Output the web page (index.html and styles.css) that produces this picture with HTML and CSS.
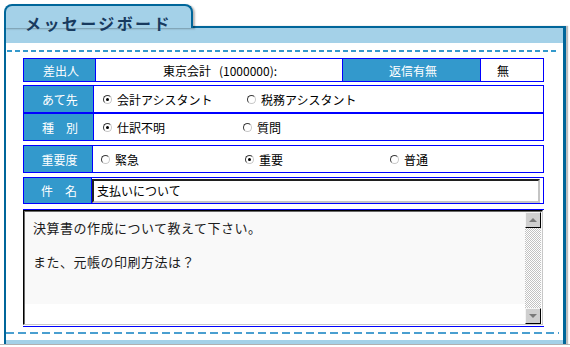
FILE: index.html
```html
<!DOCTYPE html>
<html lang="ja">
<head>
<meta charset="utf-8">
<title>メッセージボード</title>
<link rel="stylesheet" href="styles.css">
</head>
<body>
<div class="board">
  <div class="tab"><h1 class="title">メッセージボード</h1></div>
  <div class="panel">
    <div class="band"></div>
    <div class="dash-top"></div>
    <div class="form">
      <div class="row row-sender">
        <div class="label">差出人</div>
        <div class="value center">東京会計&nbsp;&nbsp;&nbsp;(1000000):</div>
        <div class="label">返信有無</div>
        <div class="value reply">無</div>
      </div>

      <div class="row row-to gap3">
        <div class="label">あて先</div>
        <div class="value opts">
          <span class="opt w144"><span class="radio on"></span>会計アシスタント</span>
          <span class="opt"><span class="radio"></span>税務アシスタント</span>
        </div>
      </div>

      <div class="row row-to">
        <div class="label">種　別</div>
        <div class="value opts">
          <span class="opt w140"><span class="radio on"></span>仕訳不明</span>
          <span class="opt"><span class="radio"></span>質問</span>
        </div>
      </div>

      <div class="row row-prio gap4">
        <div class="label">重要度</div>
        <div class="value opts prio">
          <span class="opt w144"><span class="radio"></span>緊急</span>
          <span class="opt w145"><span class="radio on"></span>重要</span>
          <span class="opt"><span class="radio"></span>普通</span>
        </div>
      </div>

      <div class="row row-subject gap4">
        <div class="label">件　名</div>
        <div class="value subject"><div class="input">支払いについて</div></div>
      </div>

      <div class="body-wrap">
        <div class="textarea">
          <div class="text">決算書の作成について教えて下さい。<br><br>また、元帳の印刷方法は？</div>
          <div class="scrollbar">
            <div class="sb-btn"><span class="arrow up"></span></div>
            <div class="sb-track"></div>
            <div class="sb-btn"><span class="arrow down"></span></div>
          </div>
        </div>
      </div>
    </div>
    <div class="dash-bottom"></div>
    <div class="band-bottom"></div>
  </div>
</div>
<div class="rule"></div>
</body>
</html>
```

FILE: styles.css
```css
html, body {
  margin: 0;
  padding: 0;
  background: #ffffff;
}

body {
  font-family: "Noto Sans CJK JP", "Noto Sans", sans-serif;
  font-size: 12px;
  color: #000;
  overflow: hidden;
}

.board {
  margin: 4px 0 0 4px;
  width: 562px;
}

.tab {
  position: relative;
  z-index: 2;
  box-sizing: border-box;
  width: 189px;
  height: 24px;
  margin-bottom: -2px;
  background: #a4d1e8;
  border: 2px solid #00669a;
  border-bottom: none;
  border-radius: 8px 8px 0 0;
  box-shadow: 2px 1px 2px rgba(0, 0, 0, 0.28);
}

.title {
  margin: 0;
  padding: 8px 0 0 19px;
  font-size: 16px;
  line-height: 18px;
  font-weight: bold;
  letter-spacing: 2.4px;
  color: #183a5e;
}

.panel {
  position: relative;
  z-index: 1;
  box-sizing: border-box;
  width: 562px;
  border-top: 2px solid #00669a;
  border-left: 2px solid #00669a;
  border-right: 3px solid #00669a;
  box-shadow: 2px 0 1px rgba(0, 0, 0, 0.25);
  background: #fff;
}

.band {
  height: 15px;
  background: #a4d1e8;
}

.dash-top {
  height: 2px;
  margin: 7px 4px 0 1px;
  background: repeating-linear-gradient(to right, #3399cc 0 5px, transparent 5px 8px);
}

.form {
  margin: 6px 0 0 17px;
  width: 521px;
}

.row {
  box-sizing: border-box;
  width: 521px;
  height: 28px;
  border: 1px solid #0000ff;
  display: grid;
}

.gap3 { margin-top: 3px; }
.gap4 { margin-top: 4px; }

.row-sender {
  height: 24px;
  grid-template-columns: 72px 247px 138px 1fr;
}

.row-to { grid-template-columns: 70px 1fr; }
.row-prio { grid-template-columns: 69px 1fr; }
.row-subject {
  height: 27px;
  grid-template-columns: 68px 1fr;
}

.label {
  background: #3399cc;
  color: #ffffff;
  border-right: 1px solid #0000ff;
  display: flex;
  align-items: center;
  justify-content: center;
  padding-left: 3px;
  white-space: nowrap;
}

.value {
  display: flex;
  align-items: center;
  white-space: nowrap;
  border-right: 1px solid #0000ff;
}

.value:last-child { border-right: none; }

.center {
  justify-content: center;
  padding-left: 2px;
}

.reply { padding-left: 16px; }

.opts { padding-left: 9px; }
.prio { padding-left: 8px; }

.opt {
  display: inline-flex;
  align-items: center;
}

.w140 { width: 140px; }
.w144 { width: 144px; }
.w145 { width: 145px; }

.radio {
  box-sizing: border-box;
  width: 9px;
  height: 9px;
  margin-right: 5px;
  border-radius: 50%;
  border: 1px solid;
  border-color: #3a3a3a #c8c8c8 #c8c8c8 #3a3a3a;
  background: #fff;
  position: relative;
}

.radio.on::after {
  content: "";
  position: absolute;
  left: 2px;
  top: 2px;
  width: 3px;
  height: 3px;
  border-radius: 50%;
  background: #000;
}

.subject {
  align-items: flex-start;
  padding-top: 1px;
}

.input {
  box-sizing: border-box;
  width: 448px;
  height: 24px;
  padding: 0 0 0 3px;
  border: 2px solid;
  border-color: #202020 #c4c4c4 #c4c4c4 #202020;
  line-height: 20px;
  background: #fff;
}

.body-wrap {
  margin-top: 5px;
  width: 521px;
  border-top: 1px solid #0000ff;
  border-bottom: 1px solid #0000ff;
  padding-bottom: 1px;
}

.textarea {
  box-sizing: border-box;
  width: 520px;
  height: 115px;
  border: 1px solid;
  border-color: #000 #c8c8c8 #c8c8c8 #000;
  box-shadow: inset 1px 1px 0 #6a6a6a;
  display: flex;
  background: linear-gradient(#f9f9f9, #f9f9f9) no-repeat 0 0 / 100% 93px, #fff;
}

.text {
  flex: 1;
  padding: 8px 0 0 9px;
  font-size: 13px;
  line-height: 17px;
  letter-spacing: 0.5px;
  color: #1c1c1c;
}

.scrollbar {
  width: 16px;
  margin: 1px 1px 0 0;
  display: flex;
  flex-direction: column;
}

.sb-btn {
  box-sizing: border-box;
  height: 16px;
  background: #cfcfcf;
  border: 1px solid;
  border-color: #f4f4f4 #000 #000 #f4f4f4;
  display: flex;
  align-items: center;
  justify-content: center;
}

.sb-track {
  flex: 1;
  background: repeating-conic-gradient(#c2c2c2 0 25%, #ffffff 0 50%) 0 0 / 2px 2px;
}

.arrow {
  width: 0;
  height: 0;
  border-left: 4px solid transparent;
  border-right: 4px solid transparent;
}

.arrow.up { border-bottom: 4px solid #7a7a7a; }
.arrow.down { border-top: 4px solid #7a7a7a; }

.dash-bottom {
  height: 2px;
  margin: 5px 4px 0 0;
  background: repeating-linear-gradient(to right, #4a9fd0 0 8px, transparent 8px 12px);
}

.band-bottom {
  height: 4px;
  margin-top: 6px;
  background: #a4d1e8;
}

.rule {
  height: 1px;
  background: #b8b8b8;
}
```
